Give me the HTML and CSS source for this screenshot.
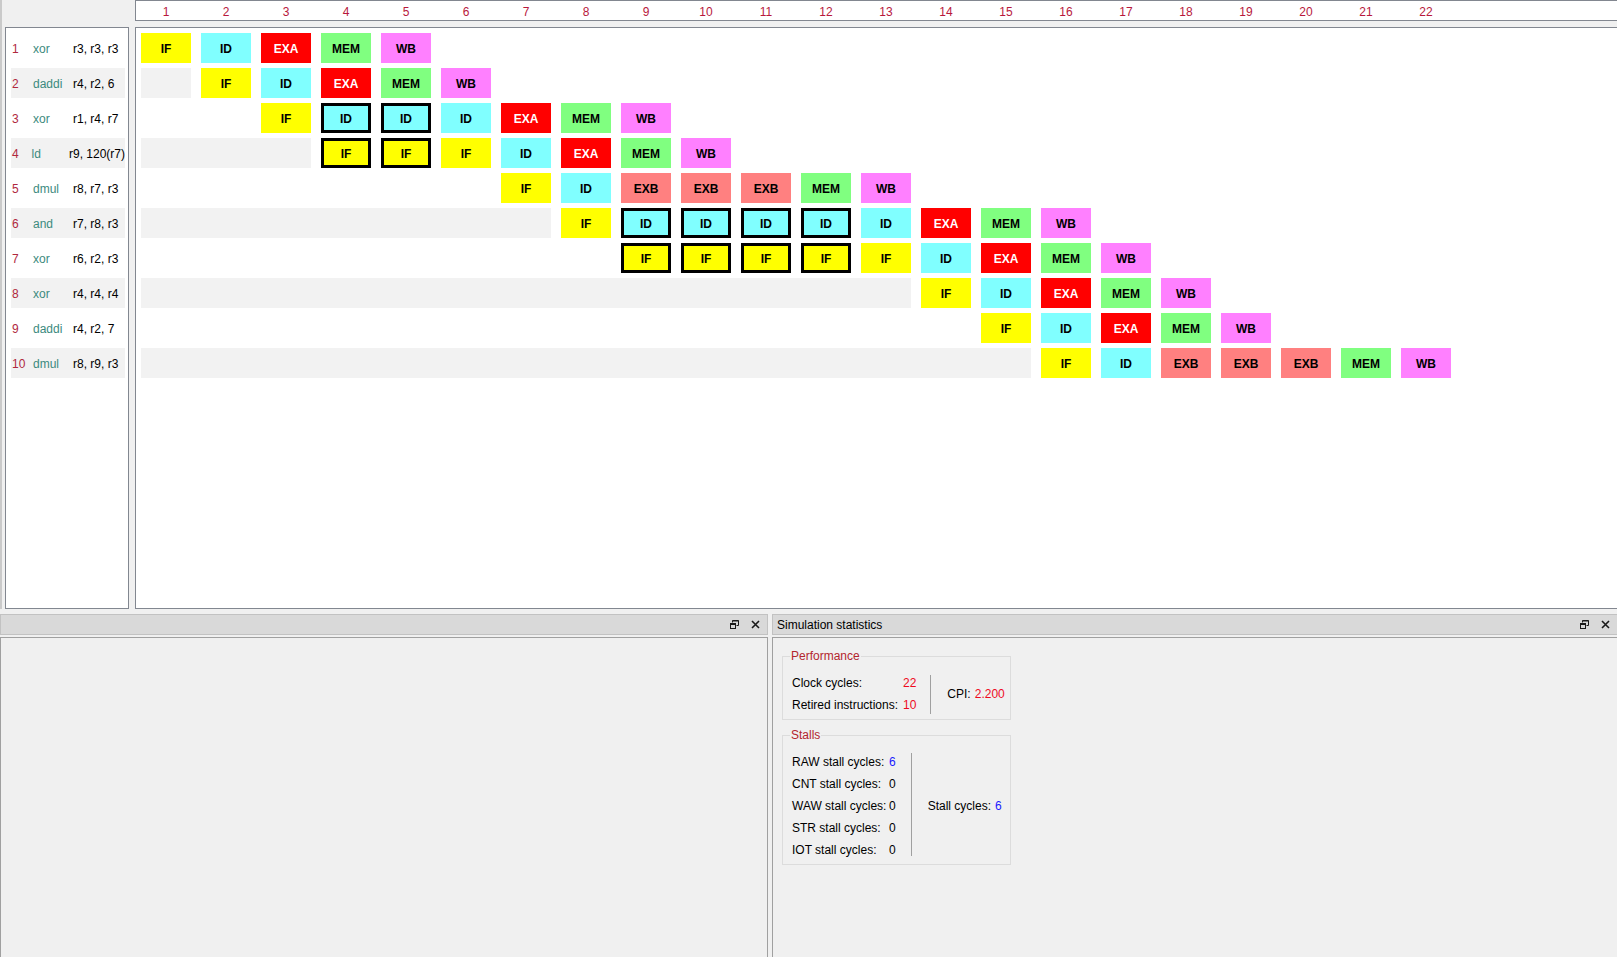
FILE: index.html
```html
<!DOCTYPE html>
<html>
<head>
<meta charset="utf-8">
<title>Pipeline</title>
<link rel="stylesheet" href="styles.css">
</head>
<body>
<div class="top">
  <div class="lcol">
    <div class="lspacer"></div>
    <div class="ipanel">
      <div class="irow"><span class="inum">1</span><span class="imn">xor</span><span class="iop">r3, r3, r3</span></div>
      <div class="irow alt"><span class="inum">2</span><span class="imn">daddi</span><span class="iop">r4, r2, 6</span></div>
      <div class="irow"><span class="inum">3</span><span class="imn">xor</span><span class="iop">r1, r4, r7</span></div>
      <div class="irow alt"><span class="inum">4</span><span class="imn">ld</span><span class="iop">r9, 120(r7)</span></div>
      <div class="irow"><span class="inum">5</span><span class="imn">dmul</span><span class="iop">r8, r7, r3</span></div>
      <div class="irow alt"><span class="inum">6</span><span class="imn">and</span><span class="iop">r7, r8, r3</span></div>
      <div class="irow"><span class="inum">7</span><span class="imn">xor</span><span class="iop">r6, r2, r3</span></div>
      <div class="irow alt"><span class="inum">8</span><span class="imn">xor</span><span class="iop">r4, r4, r4</span></div>
      <div class="irow"><span class="inum">9</span><span class="imn">daddi</span><span class="iop">r4, r2, 7</span></div>
      <div class="irow alt"><span class="inum">10</span><span class="imn">dmul</span><span class="iop">r8, r9, r3</span></div>
    </div>
  </div>
  <div class="rcol">
    <div class="hdr">
      <span>1</span><span>2</span><span>3</span><span>4</span><span>5</span><span>6</span><span>7</span><span>8</span><span>9</span><span>10</span><span>11</span><span>12</span><span>13</span><span>14</span><span>15</span><span>16</span><span>17</span><span>18</span><span>19</span><span>20</span><span>21</span><span>22</span>
    </div>
    <div class="main">
      <div class="prow">
        <div class="c if">IF</div><div class="c id">ID</div><div class="c exa">EXA</div><div class="c mem">MEM</div><div class="c wb">WB</div>
      </div>
      <div class="prow">
        <div class="pad alt" style="grid-column: 1 / 2"></div>
        <div class="c if">IF</div><div class="c id">ID</div><div class="c exa">EXA</div><div class="c mem">MEM</div><div class="c wb">WB</div>
      </div>
      <div class="prow">
        <div class="pad" style="grid-column: 1 / 3"></div>
        <div class="c if">IF</div><div class="c id st">ID</div><div class="c id st">ID</div><div class="c id">ID</div><div class="c exa">EXA</div><div class="c mem">MEM</div><div class="c wb">WB</div>
      </div>
      <div class="prow">
        <div class="pad alt" style="grid-column: 1 / 4"></div>
        <div class="c if st">IF</div><div class="c if st">IF</div><div class="c if">IF</div><div class="c id">ID</div><div class="c exa">EXA</div><div class="c mem">MEM</div><div class="c wb">WB</div>
      </div>
      <div class="prow">
        <div class="pad" style="grid-column: 1 / 7"></div>
        <div class="c if">IF</div><div class="c id">ID</div><div class="c exb">EXB</div><div class="c exb">EXB</div><div class="c exb">EXB</div><div class="c mem">MEM</div><div class="c wb">WB</div>
      </div>
      <div class="prow">
        <div class="pad alt" style="grid-column: 1 / 8"></div>
        <div class="c if">IF</div><div class="c id st">ID</div><div class="c id st">ID</div><div class="c id st">ID</div><div class="c id st">ID</div><div class="c id">ID</div><div class="c exa">EXA</div><div class="c mem">MEM</div><div class="c wb">WB</div>
      </div>
      <div class="prow">
        <div class="pad" style="grid-column: 1 / 9"></div>
        <div class="c if st">IF</div><div class="c if st">IF</div><div class="c if st">IF</div><div class="c if st">IF</div><div class="c if">IF</div><div class="c id">ID</div><div class="c exa">EXA</div><div class="c mem">MEM</div><div class="c wb">WB</div>
      </div>
      <div class="prow">
        <div class="pad alt" style="grid-column: 1 / 14"></div>
        <div class="c if">IF</div><div class="c id">ID</div><div class="c exa">EXA</div><div class="c mem">MEM</div><div class="c wb">WB</div>
      </div>
      <div class="prow">
        <div class="pad" style="grid-column: 1 / 15"></div>
        <div class="c if">IF</div><div class="c id">ID</div><div class="c exa">EXA</div><div class="c mem">MEM</div><div class="c wb">WB</div>
      </div>
      <div class="prow">
        <div class="pad alt" style="grid-column: 1 / 16"></div>
        <div class="c if">IF</div><div class="c id">ID</div><div class="c exb">EXB</div><div class="c exb">EXB</div><div class="c exb">EXB</div><div class="c mem">MEM</div><div class="c wb">WB</div>
      </div>
    </div>
  </div>
</div>
<div class="bottom">
  <div class="dock dock-l">
    <div class="dtitle">
      <span class="dname"></span>
      <span class="dicons">
        <svg class="ico" width="9" height="9" viewBox="0 0 9 9"><path d="M2.5 2.5V0.5h6v5h-2" fill="none" stroke="#1a1a1a" stroke-width="1"/><path d="M2.5 1h6" stroke="#1a1a1a" stroke-width="1"/><rect x="0.5" y="3.5" width="5" height="5" fill="none" stroke="#1a1a1a" stroke-width="1"/><path d="M0.5 4.5h5" stroke="#1a1a1a" stroke-width="1"/></svg>
        <svg class="ico" width="9" height="9" viewBox="0 0 9 9"><path d="M1 1L8 8M8 1L1 8" stroke="#1a1a1a" stroke-width="1.6"/></svg>
      </span>
    </div>
    <div class="dbody"></div>
  </div>
  <div class="dock dock-r">
    <div class="dtitle">
      <span class="dname">Simulation statistics</span>
      <span class="dicons">
        <svg class="ico" width="9" height="9" viewBox="0 0 9 9"><path d="M2.5 2.5V0.5h6v5h-2" fill="none" stroke="#1a1a1a" stroke-width="1"/><path d="M2.5 1h6" stroke="#1a1a1a" stroke-width="1"/><rect x="0.5" y="3.5" width="5" height="5" fill="none" stroke="#1a1a1a" stroke-width="1"/><path d="M0.5 4.5h5" stroke="#1a1a1a" stroke-width="1"/></svg>
        <svg class="ico" width="9" height="9" viewBox="0 0 9 9"><path d="M1 1L8 8M8 1L1 8" stroke="#1a1a1a" stroke-width="1.6"/></svg>
      </span>
    </div>
    <div class="dbody stats">
      <fieldset class="grp perf">
        <legend>Performance</legend>
        <div class="grpin">
          <div class="kv kv-perf">
            <span>Clock cycles:</span><span class="red">22</span>
            <span>Retired instructions:</span><span class="red">10</span>
          </div>
          <div class="sep sep-perf"></div>
          <div class="side"><span>CPI:</span><span class="red">2.200</span></div>
        </div>
      </fieldset>
      <fieldset class="grp stalls">
        <legend>Stalls</legend>
        <div class="grpin">
          <div class="kv kv-stall">
            <span>RAW stall cycles:</span><span class="blue">6</span>
            <span>CNT stall cycles:</span><span>0</span>
            <span>WAW stall cycles:</span><span>0</span>
            <span>STR stall cycles:</span><span>0</span>
            <span>IOT stall cycles:</span><span>0</span>
          </div>
          <div class="sep sep-stall"></div>
          <div class="side"><span>Stall cycles:</span><span class="blue">6</span></div>
        </div>
      </fieldset>
    </div>
  </div>
</div>
</body>
</html>
```

FILE: styles.css
```css
html, body {
  margin: 0;
  padding: 0;
}
body {
  width: 1617px;
  height: 957px;
  overflow: hidden;
  background: #f0f0f0;
  font-family: "Segoe UI", "Liberation Sans", Arial, sans-serif;
  font-size: 12px;
  color: #000;
}

/* ---------- top area ---------- */
.top {
  display: flex;
  height: 609px;
}
.lcol {
  width: 135px;
  flex: 0 0 135px;
  box-sizing: border-box;
  border-left: 2px solid #cacaca;
  padding-left: 3px;
}
.lspacer {
  height: 27px;
}
.ipanel {
  width: 124px;
  height: 582px;
  box-sizing: border-box;
  background: #fff;
  border: 1px solid #828790;
  padding: 5px 0 0 5px;
  display: flex;
  flex-direction: column;
  gap: 5px;
}
.irow {
  width: 114px;
  height: 30px;
  box-sizing: border-box;
  padding-top: 2px;
  display: flex;
  align-items: center;
  white-space: nowrap;
}
.irow.alt {
  background: #f2f2f2;
}
.inum {
  width: 22px;
  padding-left: 1px;
  box-sizing: border-box;
  color: #b0283e;
}
.imn {
  width: 40px;
  color: #3c8a7e;
}
.iop {
  color: #000;
}

.rcol {
  flex: 1;
  display: flex;
  flex-direction: column;
  min-width: 0;
}
.hdr {
  height: 21px;
  box-sizing: border-box;
  background: #fff;
  border: 1px solid #828790;
  border-right: none;
  padding-left: 5px;
  display: grid;
  grid-template-columns: repeat(22, 50px);
  column-gap: 10px;
  align-items: center;
  color: #b8183c;
}
.hdr span {
  text-align: center;
  line-height: 19px;
  padding-top: 2px;
}
.main {
  margin-top: 6px;
  height: 582px;
  box-sizing: border-box;
  background: #fff;
  border: 1px solid #828790;
  border-right: none;
  padding: 5px 0 0 5px;
  display: flex;
  flex-direction: column;
  gap: 5px;
}
.prow {
  display: grid;
  grid-template-columns: repeat(22, 50px);
  column-gap: 10px;
  height: 30px;
}
.pad {
  height: 30px;
}
.pad.alt {
  background: #f2f2f2;
}
.c {
  box-sizing: border-box;
  height: 30px;
  padding-top: 2px;
  display: flex;
  align-items: center;
  justify-content: center;
  font-weight: bold;
  font-size: 12px;
  color: #000;
}
.c.st {
  border: 3px solid #000;
}
.if  { background: #ffff00; }
.id  { background: #80ffff; }
.exa { background: #ff0000; color: #fff; }
.exb { background: #ff8080; }
.mem { background: #80ff80; }
.wb  { background: #ff80ff; }

/* ---------- bottom docks ---------- */
.bottom {
  display: flex;
  margin-top: 5px;
  height: 343px;
}
.dock {
  display: flex;
  flex-direction: column;
}
.dock-l {
  width: 768px;
  flex: 0 0 768px;
}
.dock-r {
  flex: 1;
  margin-left: 4px;
}
.dtitle {
  height: 21px;
  box-sizing: border-box;
  background: #d9d9d9;
  border: 1px solid #c2c2c2;
  display: flex;
  align-items: center;
  justify-content: space-between;
  padding: 0 7px 0 4px;
}
.dock-r .dtitle {
  border-right: none;
}
.dname {
  font-size: 12px;
  color: #000;
}
.dicons {
  display: flex;
  align-items: center;
  gap: 12px;
}
.ico {
  display: block;
}
.dbody {
  flex: 1;
  margin-top: 2px;
  box-sizing: border-box;
  background: #f0f0f0;
  border: 1px solid #a0a0a0;
  border-bottom: none;
}
.dock-r .dbody {
  border-right: none;
}
.stats {
  padding: 11px 0 0 9px;
}
.grp {
  width: 229px;
  min-width: 0;
  box-sizing: border-box;
  margin: 0;
  border: 1px solid #dcdcdc;
  padding: 8px 2px 3px 9px;
}
.grp legend {
  color: #b3262e;
  font-size: 12px;
  line-height: 15px;
  padding: 0 1px;
  margin-left: -2px;
}
.stalls {
  margin-top: 8px;
  padding-bottom: 3px;
}
.grpin {
  display: flex;
  align-items: stretch;
}
.kv {
  display: grid;
  white-space: nowrap;
}
.kv-perf {
  grid-template-columns: 111px auto;
  line-height: 22px;
}
.kv-stall {
  grid-template-columns: 97px auto;
  line-height: 22px;
}
.sep {
  width: 1px;
  background: #a0a0a0;
}
.sep-perf {
  margin: 3px 16px 2px 14px;
}
.sep-stall {
  margin: 2px 16px 5px 15px;
}
.side {
  align-self: center;
  display: flex;
  gap: 4px;
  white-space: nowrap;
}
.red {
  color: #ee0a1e;
}
.blue {
  color: #1a1aff;
}
```
